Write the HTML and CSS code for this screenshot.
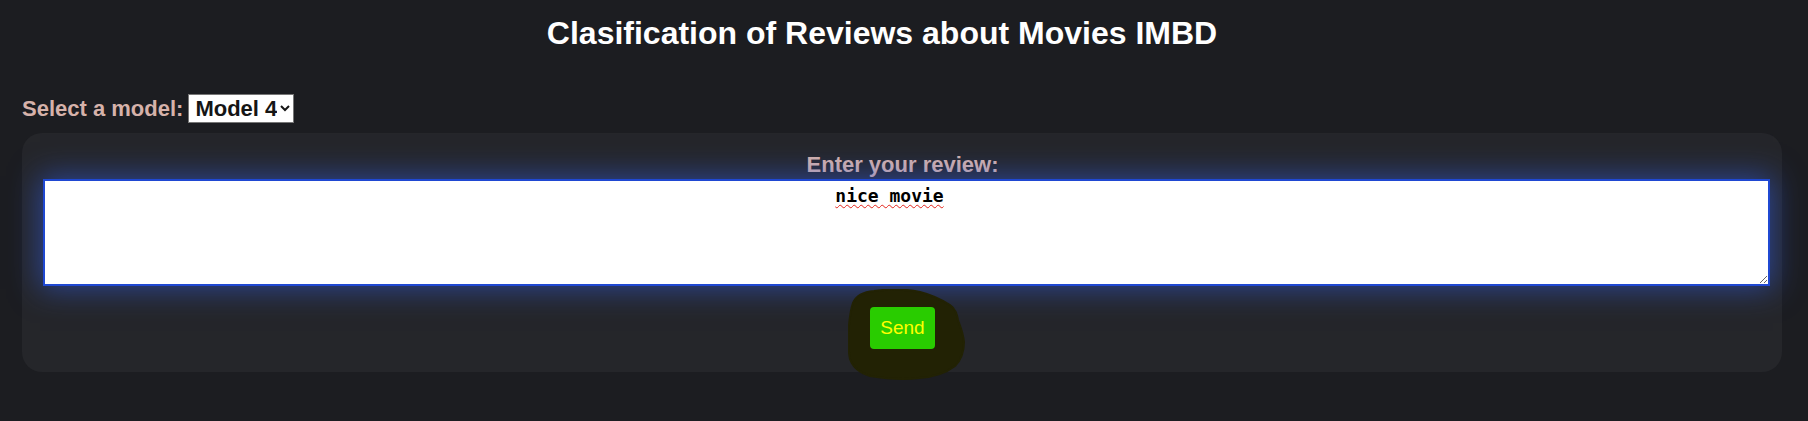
FILE: index.html
```html
<!DOCTYPE html>
<html lang="en">
<head>
<meta charset="utf-8">
<title>Clasification of Reviews about Movies IMBD</title>
<link rel="stylesheet" href="styles.css">
</head>
<body>
<div class="page">
  <h1 class="title">Clasification of Reviews about Movies IMBD</h1>
  <div class="model-row">
    <label class="field-label" for="model">Select a model:</label>
    <select id="model" class="model-select">
      <option>Model 1</option>
      <option>Model 2</option>
      <option>Model 3</option>
      <option selected>Model 4</option>
    </select>
  </div>
  <form class="card">
    <label class="field-label review-label" for="review">Enter your review:</label>
    <textarea id="review" class="review" spellcheck="false">nice movie</textarea>
    <div class="actions">
      <div class="send-wrap">
        <svg class="scribble" width="118" height="92" viewBox="0 0 118 92" aria-hidden="true">
          <path d="M5 14 C8 7 14 3 26 2 C40 0 58 0 72 3 C84 6 94 11 102 16 C108 20 109 26 110 31 C112 37 115 43 116 53 C116 62 114 70 107 77 C98 84 86 88 71 89 C56 91 40 90 22 87 C12 84 5 79 2 70 C0 60 0 48 1 36 C2 26 3 19 5 14 Z" fill="#222204" stroke="#222204" stroke-width="2" stroke-linejoin="round"/>
        </svg>
        <button type="button" class="send">Send</button>
      </div>
    </div>
  </form>
</div>
</body>
</html>
```

FILE: styles.css
```css
html, body {
  margin: 0;
  padding: 0;
  background: #1c1d21;
}

body {
  font-family: "Liberation Sans", Arial, sans-serif;
  height: 421px;
  overflow: hidden;
}

.page {
  padding: 0 26px 0 22px;
}

.title {
  margin: 15px 0 0;
  padding-right: 40px;
  font-size: 32px;
  line-height: 37px;
  font-weight: bold;
  color: #ffffff;
  text-align: center;
}

.model-row {
  display: flex;
  align-items: baseline;
  gap: 5px;
  margin-top: 42px;
}

.field-label {
  font-size: 22px;
  line-height: 25px;
  font-weight: bold;
  color: #d6b2aa;
}

.model-select {
  font-family: "Liberation Sans", Arial, sans-serif;
  font-size: 22px;
  font-weight: bold;
  color: #151515;
  background: #ffffff;
  border: 1px solid #767676;
  border-radius: 0;
  height: 29px;
  padding: 0 0 0 2px;
}

.card {
  margin: 10px 0 0;
  background: #25262a;
  border-radius: 20px;
  padding: 19px 20px 23px 21px;
  display: flex;
  flex-direction: column;
}

.review-label {
  display: block;
  text-align: center;
  line-height: 26px;
}

.review {
  display: block;
  margin-top: 1px;
  width: calc(100% + 8px);
  height: 107px;
  box-sizing: border-box;
  border: 2px solid #1f48d2;
  outline: none;
  background: #ffffff;
  padding: 4px 36px 4px 2px;
  font-family: "DejaVu Sans Mono", "Liberation Mono", monospace;
  font-size: 18px;
  line-height: 21px;
  font-weight: bold;
  color: #000000;
  text-align: center;
  text-decoration: underline wavy #e2231a;
  text-decoration-thickness: 1px;
  text-underline-offset: 2px;
  box-shadow: 0 0 28px 3px rgba(50, 95, 235, 0.55);
}

.actions {
  display: flex;
  justify-content: center;
  margin-top: 21px;
}

.send-wrap {
  position: relative;
}

.scribble {
  position: absolute;
  left: -22px;
  top: -18px;
  z-index: 0;
}

.send {
  position: relative;
  z-index: 1;
  display: block;
  height: 42px;
  padding: 0 10px;
  border: none;
  border-radius: 4px;
  background: #29cc00;
  color: #ffff00;
  font-family: "Liberation Sans", Arial, sans-serif;
  font-size: 19px;
  line-height: 22px;
}
```
